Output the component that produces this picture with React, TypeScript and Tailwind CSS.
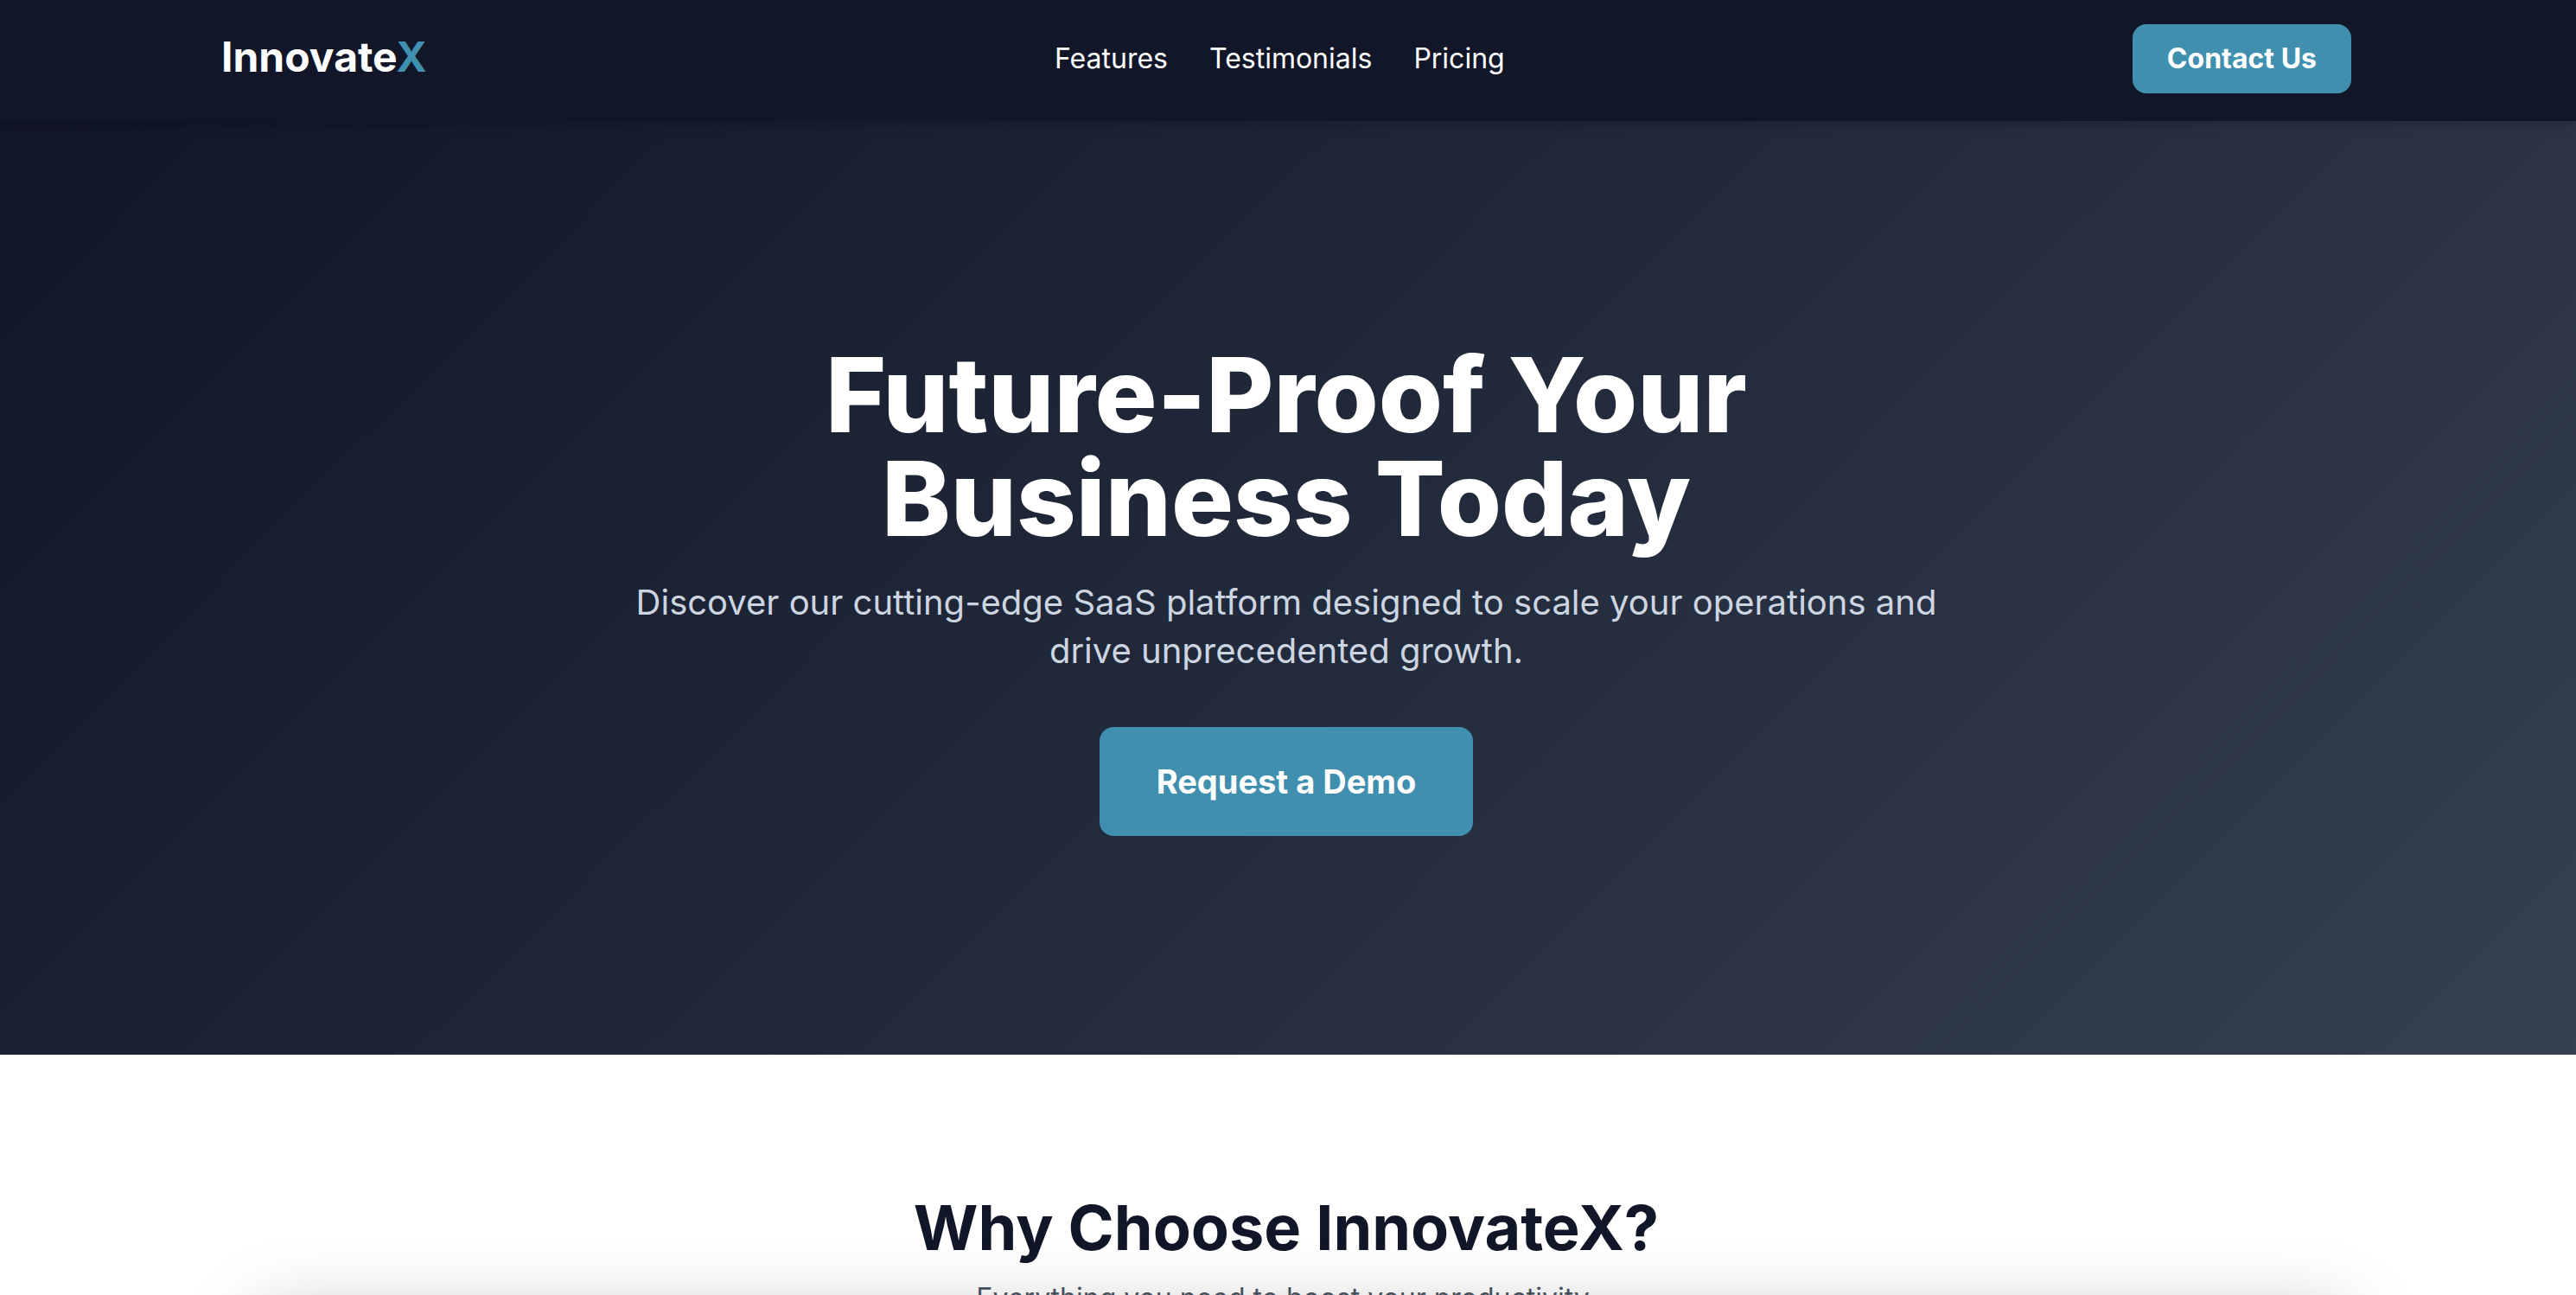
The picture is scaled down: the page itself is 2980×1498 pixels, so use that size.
const navLinks = [
  { label: "Features", href: "#features" },
  { label: "Testimonials", href: "#testimonials" },
  { label: "Pricing", href: "#pricing" },
];

function Header() {
  return (
    <header className="relative z-10 bg-[#111628] pt-7 pr-1 pb-8 shadow-[0_8px_12px_-2px_rgba(0,0,0,0.1),0_4px_8px_-2px_rgba(0,0,0,0.06)]">
      <div className="mx-auto flex max-w-[2560px] items-center justify-between px-12">
        <a href="#" className="pb-1 text-5xl leading-[64px] font-bold text-white">
          Innovate<span className="text-[#408fae]">X</span>
        </a>
        <nav aria-label="Main" className="flex gap-12">
          {navLinks.map((link) => (
            <a key={link.href} href={link.href} className="text-[32px] leading-12 text-white">
              {link.label}
            </a>
          ))}
        </nav>
        <button type="button" className="h-20 rounded-2xl bg-[#408fae] px-10 text-[32px] leading-12 font-bold text-white">
          Contact Us
        </button>
      </div>
    </header>
  );
}

function Hero() {
  return (
    <section className="flex h-[1080px] flex-col items-center justify-center bg-linear-135 from-[#111628] via-[#212a3a] to-[#354052] pt-1 pr-13 pl-12 text-center">
      <h1 className="max-w-[1200px] text-[120px] leading-[120px] font-extrabold text-white">
        Future-Proof Your Business Today
      </h1>
      <p className="mt-8 max-w-[1536px] text-[40px] leading-14 text-[#cdd5e0]">
        Discover our cutting-edge SaaS platform designed to scale your operations and drive unprecedented growth.
      </p>
      <button type="button" className="mt-15 h-[126px] rounded-2xl bg-[#408fae] px-[66px] text-[38px] leading-14 font-bold text-white">
        Request a Demo
      </button>
    </section>
  );
}

function Features() {
  return (
    <section id="features" className="pt-40 pr-13 pl-12 text-center">
      <h2 className="text-[72px] leading-20 font-bold text-[#111628]">Why Choose InnovateX?</h2>
      <p className="mt-4 text-[32px] leading-13 text-[#4b5563]">Everything you need to boost your productivity.</p>
    </section>
  );
}

/* Dialog parked just below the window; only its shadow reaches the page. */
function HiddenSheet() {
  return (
    <div
      aria-hidden="true"
      className="fixed right-67 bottom-0 left-75 z-20 h-80 translate-y-full bg-white shadow-[0_24px_80px_0_rgba(0,0,0,0.25)]"
    />
  );
}

export default function App() {
  return (
    <div className="h-screen overflow-hidden bg-white font-['Inter',sans-serif]">
      <Header />
      <Hero />
      <Features />
      <HiddenSheet />
    </div>
  );
}
